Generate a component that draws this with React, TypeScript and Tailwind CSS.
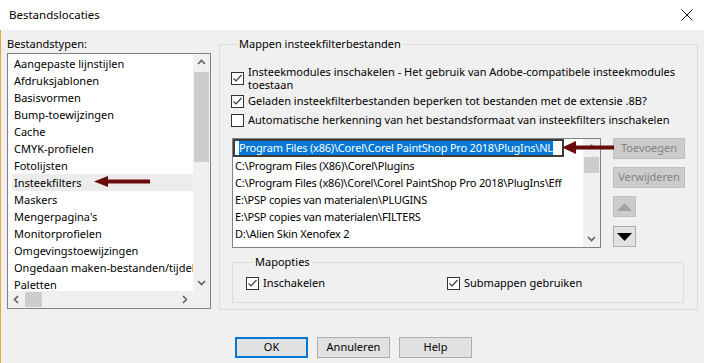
import type { ReactNode } from "react";

const fileTypes = [
  "Aangepaste lijnstijlen",
  "Afdruksjablonen",
  "Basisvormen",
  "Bump-toewijzingen",
  "Cache",
  "CMYK-profielen",
  "Fotolijsten",
  "Insteekfilters",
  "Maskers",
  "Mengerpagina's",
  "Monitorprofielen",
  "Omgevingstoewijzingen",
  "Ongedaan maken-bestanden/tijdelijke bestanden",
  "Paletten",
];

const paths = [
  "C:\\Program Files (X86)\\Corel\\Plugins",
  "C:\\Program Files (x86)\\Corel\\Corel PaintShop Pro 2018\\PlugIns\\Effects",
  "E:\\PSP copies van materialen\\PLUGINS",
  "E:\\PSP copies van materialen\\FILTERS",
  "D:\\Alien Skin Xenofex 2",
];

function Chevron({ dir }: { dir: "up" | "down" | "left" | "right" }) {
  const pts = {
    up: "1,6 4.5,2.5 8,6",
    down: "1,3 4.5,6.5 8,3",
    left: "6,1 2.5,4.5 6,8",
    right: "3,1 6.5,4.5 3,8",
  }[dir];
  return (
    <svg width="9" height="9" viewBox="0 0 9 9">
      <polyline points={pts} fill="none" stroke="#606060" strokeWidth="1.6" />
    </svg>
  );
}

function CheckBox({ checked }: { checked: boolean }) {
  return (
    <div className="w-[13px] h-[13px] shrink-0 border border-[#333333] bg-white flex items-center justify-center">
      {checked && (
        <svg width="11" height="11" viewBox="0 0 11 11">
          <polyline points="1.5,5.5 4,8 9.5,2" fill="none" stroke="#3a3a3a" strokeWidth="1.2" />
        </svg>
      )}
    </div>
  );
}

function Check({ checked, children }: { checked: boolean; children: ReactNode }) {
  return (
    <div className="flex items-center gap-[4px] h-[18px] whitespace-nowrap">
      <CheckBox checked={checked} />
      <span>{children}</span>
    </div>
  );
}

function RedArrow({ w, h }: { w: number; h: number }) {
  const mid = h / 2;
  return (
    <svg width={w} height={h} viewBox={`0 0 ${w} ${h}`}>
      <polygon points={`0,${mid} 14,0 14,${h}`} fill="#6a0a0a" />
      <rect x="13" y={mid - 2} width={w - 13} height="4" fill="#6a0a0a" />
    </svg>
  );
}

export default function App() {
  return (
    <div className="w-[704px] h-[363px] bg-[#f0f0f0] text-[11px] text-black font-['Segoe_UI','Noto_Sans',sans-serif] overflow-hidden">
      {/* title bar */}
      <div className="h-[30px] bg-white flex items-center justify-between pl-[9px] pr-[9px]">
        <span className="text-[11.5px]">Bestandslocaties</span>
        <svg width="14" height="14" viewBox="0 0 14 14" className="mr-[1px]">
          <path d="M1.5 1.5 L12.5 12.5 M12.5 1.5 L1.5 12.5" stroke="#111" strokeWidth="1" />
        </svg>
      </div>

      <div className="border-l border-[#e8a33d] h-[333px] pt-[6px] flex">
        {/* left column */}
        <div className="ml-[6px] w-[204px] flex flex-col">
          <div className="h-[16px] leading-[16px]">Bestandstypen:</div>
          <div className="relative mt-[1px] h-[256px] border border-[#828282] bg-white flex flex-col">
            <div className="flex h-[237px]">
              <div className="flex-1 overflow-hidden pl-[4px] pt-[1px]">
                {fileTypes.map((t) => (
                  <div
                    key={t}
                    className={`h-[17px] leading-[17px] px-[2px] whitespace-nowrap ${t === "Insteekfilters" ? "bg-[#ececec]" : ""}`}
                  >
                    {t}
                  </div>
                ))}
              </div>
              <div className="w-[17px] bg-[#f0f0f0] flex flex-col">
                <div className="h-[17px] flex items-center justify-center">
                  <Chevron dir="up" />
                </div>
                <div className="mt-[1px] mx-[1px] h-[90px] bg-[#cdcdcd]" />
                <div className="flex-1" />
                <div className="h-[17px] flex items-center justify-center">
                  <Chevron dir="down" />
                </div>
              </div>
            </div>
            <div className="flex h-[17px]">
              <div className="flex-1 bg-[#f0f0f0] flex items-center">
                <div className="w-[17px] h-[17px] flex items-center justify-center">
                  <Chevron dir="left" />
                </div>
                <div className="w-[17px] h-[15px] bg-[#cdcdcd]" />
                <div className="flex-1" />
                <div className="w-[17px] h-[17px] flex items-center justify-center">
                  <Chevron dir="right" />
                </div>
              </div>
              <div className="w-[17px] bg-[#f0f0f0]" />
            </div>
            <div className="absolute left-[86px] top-[122px]">
              <RedArrow w={56} h={11} />
            </div>
          </div>
        </div>

        {/* right column */}
        <div className="relative ml-[8px] w-[479px] flex flex-col">
          <fieldset className="border border-[#dcdcdc] pl-[11px] pr-[11px] pt-[13px] pb-[6px]">
            <legend className="ml-[6px] px-[2px] h-[16px] leading-[16px]">Mappen insteekfilterbestanden</legend>
            <div className="flex items-center gap-[4px]">
              <CheckBox checked />
              <div className="leading-[13px] whitespace-nowrap">
                Insteekmodules inschakelen - Het gebruik van Adobe-compatibele insteekmodules
                <br />
                toestaan
              </div>
            </div>
            <div className="mt-[1px]">
              <Check checked>Geladen insteekfilterbestanden beperken tot bestanden met de extensie .8B?</Check>
            </div>
            <div className="mt-[1px]">
              <Check checked={false}>Automatische herkenning van het bestandsformaat van insteekfilters inschakelen</Check>
            </div>

            <div className="flex mt-[9px] ml-[1px]">
              <div className="w-[369px] h-[110px] border border-[#828282] bg-white flex">
                <div className="flex-1 overflow-hidden tracking-[-0.2px]">
                  <div className="w-[331px] h-[18px] border-2 border-[#3c3c3c] pl-[4px] flex items-center overflow-hidden whitespace-nowrap">
                    <span className="bg-[#0078d7] text-white leading-[14px]">
                      Program Files (x86)\Corel\Corel PaintShop Pro 2018\PlugIns\NL
                    </span>
                  </div>
                  {paths.map((p) => (
                    <div key={p} className="w-[329px] h-[17px] leading-[17px] pl-[2px] overflow-hidden whitespace-nowrap">
                      {p}
                    </div>
                  ))}
                </div>
                <div className="w-[17px] bg-[#f0f0f0] flex flex-col">
                  <div className="h-[17px] flex items-center justify-center">
                    <Chevron dir="up" />
                  </div>
                  <div className="mt-[1px] mx-[1px] h-[16px] bg-[#cdcdcd]" />
                  <div className="flex-1" />
                  <div className="h-[17px] flex items-center justify-center">
                    <Chevron dir="down" />
                  </div>
                </div>
              </div>

              <div className="ml-[12px] w-[72px] flex flex-col">
                <div className="h-[21px] bg-[#cccccc] border border-[#bfbfbf] text-[#838383] flex items-center justify-center">
                  Toevoegen
                </div>
                <div className="mt-[8px] h-[21px] bg-[#cccccc] border border-[#bfbfbf] text-[#838383] flex items-center justify-center">
                  Verwijderen
                </div>
                <div className="mt-[8px] w-[23px] h-[21px] bg-[#cccccc] border border-[#bfbfbf] flex items-center justify-center">
                  <svg width="15" height="8" viewBox="0 0 15 8">
                    <polygon points="0,8 7.5,0 15,8" fill="#a2a2a2" />
                  </svg>
                </div>
                <div className="mt-[9px] w-[23px] h-[21px] bg-[#e1e1e1] border border-[#adadad] flex items-center justify-center">
                  <svg width="15" height="8" viewBox="0 0 15 8">
                    <polygon points="0,0 7.5,8 15,0" fill="#000000" />
                  </svg>
                </div>
              </div>
            </div>

            <fieldset className="mt-[6px] ml-[1px] w-[452px] border border-[#dcdcdc] pl-[13px] pt-[4px] pb-[10px]">
              <legend className="ml-[7px] px-[2px] h-[16px] leading-[16px]">Mapopties</legend>
              <div className="flex">
                <div className="w-[201px]">
                  <Check checked>Inschakelen</Check>
                </div>
                <Check checked>Submappen gebruiken</Check>
              </div>
            </fieldset>
          </fieldset>

          <div className="flex gap-[9px] ml-[16px] mt-[27px]">
            <div className="w-[73px] h-[21px] bg-[#e1e1e1] border-2 border-[#0078d7] flex items-center justify-center">OK</div>
            <div className="w-[73px] h-[21px] bg-[#e1e1e1] border border-[#adadad] flex items-center justify-center">Annuleren</div>
            <div className="w-[73px] h-[21px] bg-[#e1e1e1] border border-[#adadad] flex items-center justify-center">Help</div>
          </div>

          <div className="absolute left-[343px] top-[105px]">
            <RedArrow w={52} h={13} />
          </div>
        </div>
      </div>
    </div>
  );
}
